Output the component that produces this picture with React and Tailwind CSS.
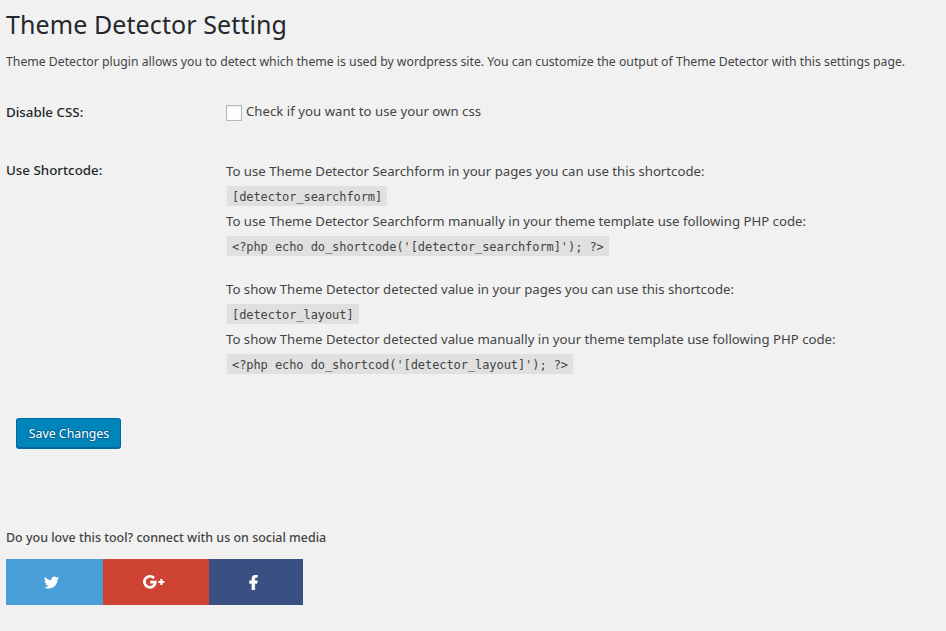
import { FaTwitter, FaFacebookF } from "react-icons/fa";

function Code({ children }) {
  return (
    <code className="ml-px block h-5 bg-[#e0e0e0] px-[5px] font-['DejaVu_Sans_Mono',monospace] text-[12px] leading-[23px] tracking-[-0.076px] whitespace-pre">
      {children}
    </code>
  );
}

function Snippet({ text, code }) {
  return (
    <div className="flex flex-col items-start">
      <p className="h-[25px] leading-5 whitespace-nowrap">{text}</p>
      <Code>{code}</Code>
    </div>
  );
}

function RowTitle({ children }) {
  return (
    <h2 className="w-[220px] shrink-0 text-[13.35px] leading-5 font-medium text-[#23282d]">{children}</h2>
  );
}

function GooglePlus() {
  return (
    <svg width="22" height="14" viewBox="0 0 22 14" fill="none" stroke="currentColor" strokeWidth="2.7">
      <path d="M11 3.1A5.5 5.5 0 1 0 12.4 7.1H7.2" />
      <path d="M15.4 7H21.4M18.4 4V10" strokeWidth="2.2" />
    </svg>
  );
}

export default function App() {
  return (
    <main className="h-[631px] w-[946px] overflow-hidden bg-[#f1f1f1] pl-[6px] font-['Noto_Sans','Open_Sans',sans-serif] text-[13.2px] text-[#444]">
      <h1 className="pt-2 text-[25px] leading-8 tracking-[0.09px] text-[#23282d]">Theme Detector Setting</h1>
      <p className="mt-3 text-[12.25px] leading-5 whitespace-nowrap">
        Theme Detector plugin allows you to detect which theme is used by wordpress site. You can customize the output of Theme Detector with this settings page.
      </p>

      <div className="mt-[30px] flex h-[58px]">
        <RowTitle>Disable CSS:</RowTitle>
        <label className="flex h-5 gap-1 leading-5">
          <input
            type="checkbox"
            className="mt-[3px] size-4 appearance-none border border-[#b4b9be] bg-white shadow-[inset_0_1px_2px_rgba(0,0,0,0.1)]"
          />
          <span className="-mt-px tracking-[0.02px]">Check if you want to use your own css</span>
        </label>
      </div>

      <div className="flex">
        <RowTitle>Use Shortcode:</RowTitle>
        <div className="flex flex-col pt-px">
          <Snippet
            text="To use Theme Detector Searchform in your pages you can use this shortcode:"
            code="[detector_searchform]"
          />
          <div className="h-[5px]" />
          <Snippet
            text="To use Theme Detector Searchform manually in your theme template use following PHP code:"
            code="<?php echo do_shortcode('[detector_searchform]'); ?>"
          />
          <div className="h-[23px]" />
          <Snippet
            text="To show Theme Detector detected value in your pages you can use this shortcode:"
            code="[detector_layout]"
          />
          <div className="h-[5px]" />
          <Snippet
            text="To show Theme Detector detected value manually in your theme template use following PHP code:"
            code="<?php echo do_shortcod('[detector_layout]'); ?>"
          />
        </div>
      </div>

      <button className="mt-[44px] ml-[10px] block h-[30px] w-[105px] rounded-[3px] border border-[#006799] border-t-[#0073aa] bg-[#0085ba] pt-px pl-px text-[12.3px] leading-[28px] text-white shadow-[0_1px_0_#006799] [text-shadow:0_-1px_1px_#006799,1px_0_1px_#006799,0_1px_1px_#006799,-1px_0_1px_#006799]">
        Save Changes
      </button>

      <p className="mt-20 text-[12.48px] leading-5 font-medium">
        Do you love this tool? connect with us on social media
      </p>
      <div className="mt-[11px] flex h-[46px] text-white">
        <a className="flex w-[97px] items-center justify-center bg-[#4a9fd9] pr-[6px]">
          <FaTwitter size={15} />
        </a>
        <a className="flex w-[106px] items-center justify-center bg-[#cf4332] pr-[5px]">
          <GooglePlus />
        </a>
        <a className="flex w-[94px] items-center justify-center bg-[#3a5083] pr-[6px]">
          <FaFacebookF size={15} stroke="currentColor" strokeWidth={14} />
        </a>
      </div>
    </main>
  );
}
